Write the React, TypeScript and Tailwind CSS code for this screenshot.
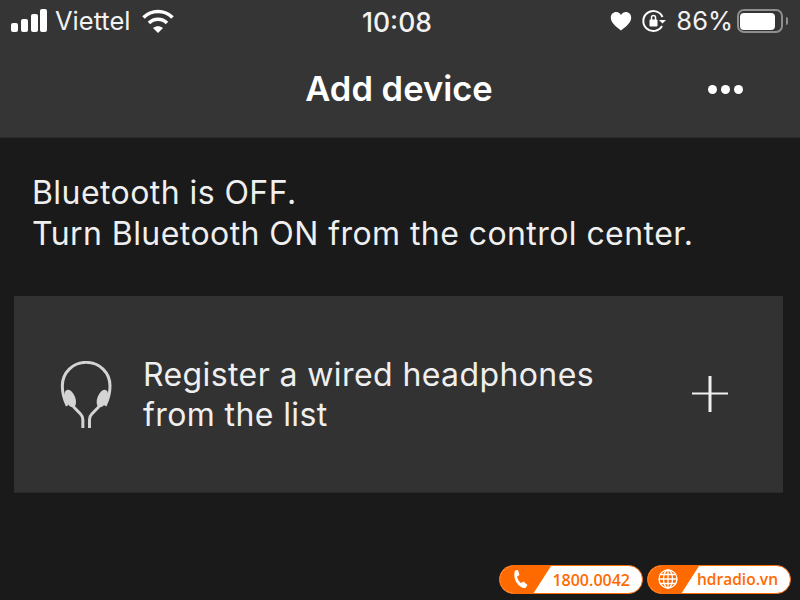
export default function App() {
  const font = { fontFamily: '"Inter","Liberation Sans",sans-serif' };
  return (
    <div className="relative w-[800px] h-[600px] overflow-hidden bg-[#1a1a1a] text-white flex flex-col" style={font}>
      <header className="h-[138px] bg-[#353535] border-b border-[#2b2b2b] flex flex-col shrink-0">
        <div className="relative h-[42px] flex items-center justify-between pl-[11px] pr-[12px] text-[#f2f2f2]">
          <div className="flex items-center">
            <svg width="36" height="24" viewBox="0 0 36 24" fill="#fff">
              <rect x="0" y="14" width="7" height="9" rx="2" />
              <rect x="10" y="10" width="7" height="13" rx="2" />
              <rect x="20" y="5" width="7" height="18" rx="2" />
              <rect x="29" y="0" width="7" height="23" rx="2" />
            </svg>
            <span className="ml-[8px] text-[25.5px] leading-none">Viettel</span>
            <svg width="32" height="26" viewBox="0 0 32 26" className="ml-[11px]" fill="none" stroke="#fff" strokeWidth="3.6">
              <path d="M1.5 9.5C9.5 1.5 22.5 1.5 30.5 9.5" />
              <path d="M7 15C12 10 20 10 25 15" />
              <path d="M11 20L16 25L21 20C18 17.5 14 17.5 11 20Z" fill="#fff" stroke="none" />
            </svg>
          </div>
          <span className="absolute left-[362px] top-[9px] text-[26.5px] leading-none font-medium">10:08</span>
          <div className="flex items-center">
            <svg width="22" height="20" viewBox="0 0 22 20" fill="#fff" className="mr-[10px]">
              <path d="M11 19.5C5 15 .8 11.5.8 6.6.8 3.2 3.3 1 6.1 1 8.1 1 10 2 11 4 12 2 13.900 1 15.900 1c2.800 0 5.300 2.200 5.300 5.600C21.200 11.500 17 15 11 19.500Z" />
            </svg>
            <svg width="24" height="24" viewBox="0 0 24 24" fill="none" stroke="#fff" strokeWidth="2" className="mr-[10px]">
              <path d="M20 17A10 10 0 1 1 20.500 8" />
              <path d="M24 11h-7l3.500 3.500Z" fill="#fff" stroke="none" />
              <rect x="7.500" y="10.500" width="8" height="7" rx="1" fill="#fff" stroke="none" />
              <path d="M9.500 11V8.500a2 2 0 0 1 4 0V11" strokeWidth="1.500" />
            </svg>
            <span className="text-[25.500px] leading-none mr-[4px]">86%</span>
            <div className="w-[46px] h-[24px] rounded-[7px] border-2 border-[#8f8f8f] p-[1px] flex items-center">
              <div className="w-[35px] h-[17px] rounded-[4px] bg-white" />
            </div>
            <div className="w-[2px] h-[8px] bg-[#8f8f8f] rounded-r ml-[3px]" />
          </div>
        </div>
        <div className="relative flex-1 flex items-center justify-center">
          <span className="text-[34.500px] font-semibold leading-none mt-[-1px] ml-[-2px]">Add device</span>
          <div className="absolute right-[57px] top-[43px] flex gap-[4px]">
            <div className="w-[9px] h-[9px] rounded-full bg-white" />
            <div className="w-[9px] h-[9px] rounded-full bg-white" />
            <div className="w-[9px] h-[9px] rounded-full bg-white" />
          </div>
        </div>
      </header>

      <div className="pl-[32px] pt-[34px] text-[32px] tracking-[0.43px] leading-[41px] text-[#efefef]">
        <div>Bluetooth is OFF.</div>
        <div>Turn Bluetooth ON from the control center.</div>
      </div>

      <div className="mx-[14px] mt-[42px] w-[769px] h-[197px] bg-[#323232] border-b border-[#2a2a2a] flex items-center pl-[46px]">
        <svg width="53" height="68" viewBox="60 35 160 205" fill="none" className="shrink-0 mt-[1px]" stroke="#d4d4d4">
          <path d="M82 170C72 150 67 130 67 110C67 70 99 39 139 39S211 70 211 110C211 130 206 150 196 170" strokeWidth="9" />
          <ellipse cx="91" cy="148" rx="15" ry="28" transform="rotate(-22 91 148)" fill="#d4d4d4" stroke="none" />
          <ellipse cx="188" cy="148" rx="15" ry="28" transform="rotate(22 188 148)" fill="#d4d4d4" stroke="none" />
          <path d="M100 172L122 195C127 200 129 205 129 212V237" strokeWidth="9" />
          <path d="M178 172L156 195C151 200 149 205 149 212V237" strokeWidth="9" />
        </svg>
        <div className="ml-[30px] text-[32px] tracking-[0.4px] leading-[40px] text-[#efefef] w-[520px] mt-[2px]">
          <div>Register a wired headphones</div>
          <div>from the list</div>
        </div>
        <svg width="36" height="36" viewBox="0 0 36 36" className="ml-[29px] shrink-0">
          <rect x="0" y="16.500" width="36" height="2" fill="#f0f0f0" />
          <rect x="16.500" y="0" width="3" height="36" fill="#f0f0f0" />
        </svg>
      </div>

      <div className="absolute left-[499px] top-[565px] flex gap-[4px]" style={{ fontFamily: '"Open Sans","Liberation Sans",sans-serif' }}>
        <div className="relative w-[144px] h-[29px] rounded-full bg-white border border-[#ff6a00] overflow-hidden flex items-center justify-end pr-[12px]">
          <div className="absolute left-0 top-0 h-full w-[51px] bg-[#ff6a00] [clip-path:polygon(0_0,100%_0,66%_100%,0_100%)]" />
          <svg width="16" height="19" viewBox="0 0 16 19" className="absolute left-[12px] top-[4px]" fill="#fff">
            <path d="M3 0.500 6 0 7.500 5 5 6.500C5.500 9 7 11.500 9 13L11.500 11.500 15.500 15 13.500 18C7.500 18.500 0 10 3 0.500Z" />
          </svg>
          <span className="relative text-[16px] font-semibold text-[#ff6a00] leading-none">1800.0042</span>
        </div>
        <div className="relative w-[144px] h-[29px] rounded-full bg-white border border-[#ff6a00] overflow-hidden flex items-center justify-end pr-[12px]">
          <div className="absolute left-0 top-0 h-full w-[51px] bg-[#ff6a00] [clip-path:polygon(0_0,100%_0,66%_100%,0_100%)]" />
          <svg width="20" height="20" viewBox="0 0 20 20" className="absolute left-[10px] top-[3px]" fill="none" stroke="#fff" strokeWidth="1.300">
            <circle cx="10" cy="10" r="9" />
            <ellipse cx="10" cy="10" rx="4.500" ry="9" />
            <path d="M10 1v18M1 10h18M2.500 5.500h15M2.500 14.500h15" />
          </svg>
          <span className="relative text-[15.500px] font-semibold text-[#ff6a00] leading-none">hdradio.vn</span>
        </div>
      </div>
    </div>
  );
}
